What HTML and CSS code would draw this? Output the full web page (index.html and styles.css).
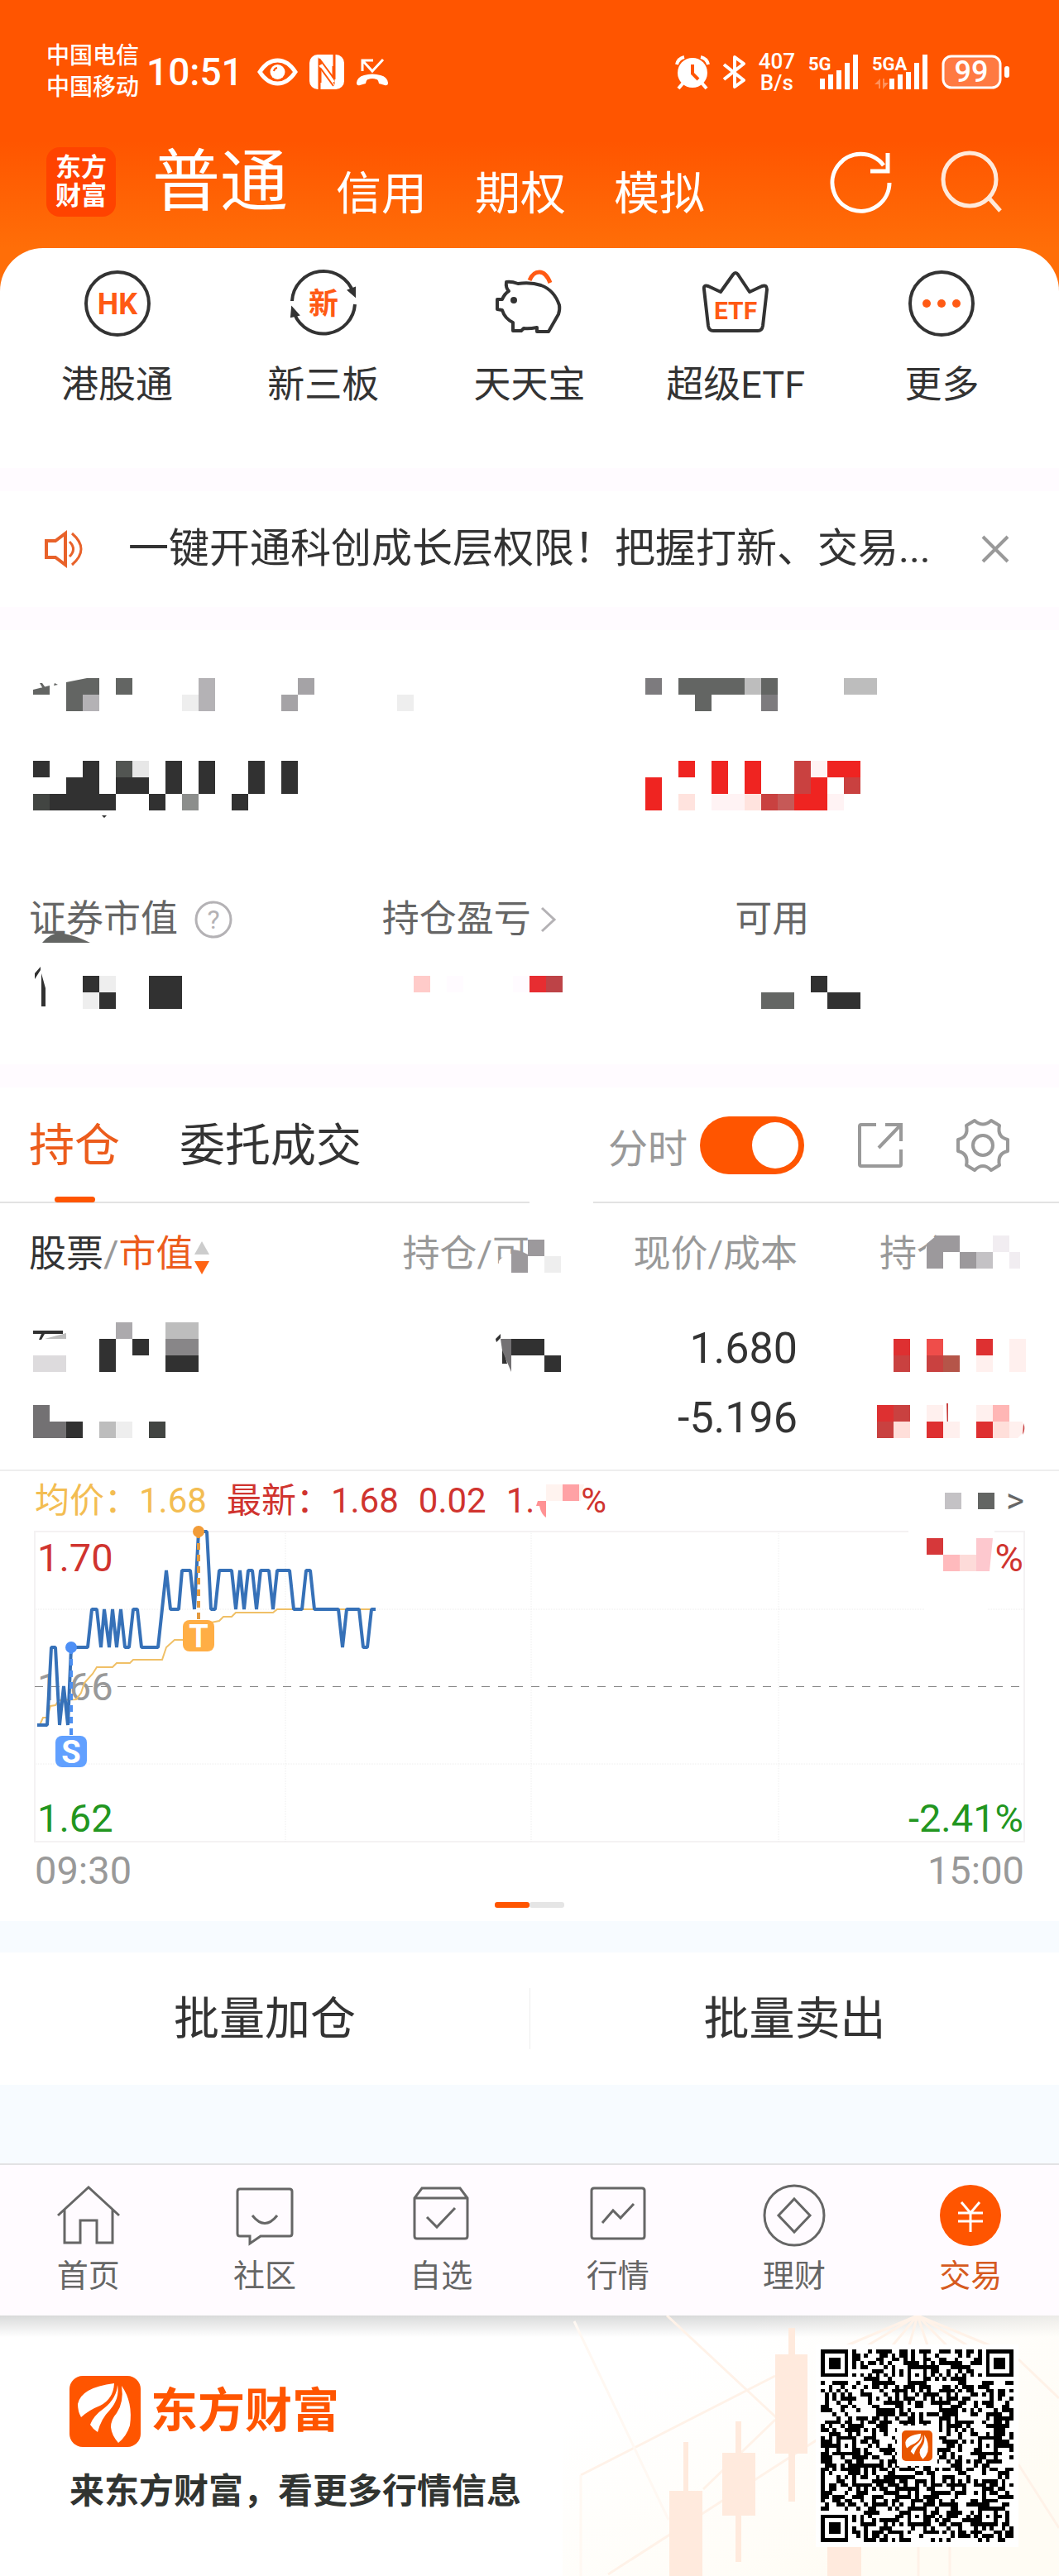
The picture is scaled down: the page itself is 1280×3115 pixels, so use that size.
FILE: index.html
```html
<!DOCTYPE html>
<html lang="zh-CN">
<head>
  <meta charset="UTF-8">
  <meta name="viewport" content="width=device-width, initial-scale=1.0">
  <title>东方财富 - 交易</title>
  <link rel="stylesheet" href="styles.css">
</head>
<body>

  <!-- Header -->
  <div class="top">
    <div class="status-bar">
      <div class="status-left">
        <div class="carriers"><div>中国电信</div><div>中国移动</div></div>
        <div class="clock">10:51</div>
        <div class="status-icons">
          <svg width="49" height="42" viewBox="0 0 49 42">
            <path d="M3 21Q12 7 24.500 7T46 21Q37 35 24.500 35T3 21z" fill="none" stroke="#fff" stroke-width="5"/>
            <circle cx="24.500" cy="21" r="9" fill="#fff"/>
            <path d="M20 20a5 5 0 0 1 4-4" fill="none" stroke="#ff5500" stroke-width="2"/>
          </svg>
          <svg width="42" height="42" viewBox="0 0 42 42">
            <rect width="42" height="42" rx="10" fill="#fff"/>
            <path d="M12 42V8l17 24V14M30 0v30M13 12v22" fill="none" stroke="#ff5500" stroke-width="3"/>
            <path d="M14 12l14 22" stroke="#fff" stroke-width="6"/>
            <path d="M12 5l17 23M13 16l16 22" stroke="#ff5500" stroke-width="2"/>
          </svg>
          <svg width="40" height="42" viewBox="0 0 40 42">
            <path d="M8 20V7h13M8 7l12 13L33 6" fill="none" stroke="#fff" stroke-width="3"/>
            <path d="M1 34q1-7 9-9 10-3 20 0 8 2 9 9 0 4-4 3l-7-2q-1-5-3-5-5-2-10 0-2 0-3 5l-7 2q-4 1-4-3z" fill="#fff"/>
          </svg>
        </div>
      </div>
      <div class="status-right">
        <svg width="42" height="42" viewBox="0 0 42 42">
          <circle cx="21" cy="22" r="18" fill="#fff"/>
          <path d="M2 12a12 12 0 0 1 9-9M40 12a12 12 0 0 0-9-9M10 34l-6 7M32 34l6 7" stroke="#fff" stroke-width="4" fill="none"/>
          <path d="M21 12v11l7 7" fill="none" stroke="#ff5500" stroke-width="4"/>
        </svg>
        <svg width="27" height="42" viewBox="0 0 27 42">
          <path d="M1 12l24 19-11 8V3l11 8L1 30" fill="none" stroke="#fff" stroke-width="4" stroke-linejoin="round"/>
        </svg>
        <div class="speed"><div>407</div><div>B/s</div></div>
        <svg width="61" height="42" viewBox="0 0 61 42" fill="#fff">
          <text x="0" y="19" class="net">5G</text>
          <path d="M14 29h6v13h-6zM24 24h6v18h-6zM34 19h6v23h-6zM44 10h6v32h-6zM54 0h6v42h-6z"/>
        </svg>
        <svg width="68" height="42" viewBox="0 0 68 42" fill="#fff">
          <text x="0" y="19" class="net">5GA</text>
          <path d="M3 36l7-7v12H8v-5zM13 29h2v5h5l-7 8z" opacity="0.35"/>
          <path d="M21 29h6v13h-6zM31 24h6v18h-6zM41 21h6v21h-6zM51 10h6v32h-6zM61 0h6v42h-6z"/>
        </svg>
        <svg width="82" height="42" viewBox="0 0 82 42">
          <rect x="2" y="2" width="69" height="38" rx="10" fill="#ff7a42" stroke="#fff" stroke-width="3"/>
          <rect x="76" y="14" width="6" height="14" rx="3" fill="#fff"/>
          <text x="36" y="33" text-anchor="middle" class="battery">99</text>
        </svg>
      </div>
    </div>

    <div class="nav">
      <div class="badge"><div>东方</div><div>财富</div></div>
      <nav class="modes">
        <a href="#" class="active">普通</a>
        <a href="#">信用</a>
        <a href="#">期权</a>
        <a href="#">模拟</a>
      </nav>
      <button class="icon-btn" aria-label="刷新">
        <svg width="74" height="74" viewBox="0 0 74 74" fill="none" stroke="#fff" stroke-width="5">
          <path d="M71 38A34.500 34.500 0 1 1 64 17"/>
          <path d="M69 2v22H48"/>
        </svg>
      </button>
      <button class="icon-btn" aria-label="搜索">
        <svg width="74" height="74" viewBox="0 0 74 74" fill="none" stroke="#ffe9da" stroke-width="5">
          <circle cx="34" cy="34" r="32"/>
          <path d="M56 55l15 17"/>
        </svg>
      </button>
    </div>

    <!-- Shortcuts -->
    <div class="shortcuts">
      <a href="#">
        <svg width="82" height="82" viewBox="0 0 82 82">
          <circle cx="41" cy="41" r="38" fill="none" stroke="#333" stroke-width="4"/>
          <text x="41" y="54" text-anchor="middle" class="ico-text">HK</text>
        </svg>
        <span>港股通</span>
      </a>
      <a href="#">
        <svg width="82" height="82" viewBox="0 0 82 82">
          <path d="M3 38A38 38 0 0 1 77 28M79 42A38 38 0 0 1 6 54" fill="none" stroke="#333" stroke-width="4"/>
          <path d="M71 25l8-3v10zM2 57l1-11 8 9z" fill="#333" stroke="#333" stroke-width="2"/>
          <text x="41" y="54" text-anchor="middle" class="ico-text">新</text>
        </svg>
        <span>新三板</span>
      </a>
      <a href="#">
        <svg width="82" height="82" viewBox="0 0 82 82">
          <path d="M41 13q4-10 12-10t13 13" fill="none" stroke="#ff5a14" stroke-width="5"/>
          <path d="M13 15q6-1 14 2 16-2 28 2 16 6 22 24 1 5-1 11L64 75H50v-5q-10 2-16 1l-3 3H21V64Q11 59 8 49l-6-1V36h6q3-7 8-10-4-4-3-11z" fill="none" stroke="#333" stroke-width="4" stroke-linejoin="round"/>
          <circle cx="22" cy="37" r="4" fill="#333"/>
        </svg>
        <span>天天宝</span>
      </a>
      <a href="#">
        <svg width="82" height="82" viewBox="0 0 82 82">
          <path d="M3 24q-1-6 5-4l15 7L38 6q3-4 6 0l14 21 15-7q6-2 6 4l-5 44q-1 6-6 6H14q-5 0-6-6z" fill="none" stroke="#333" stroke-width="4" stroke-linejoin="round"/>
          <text x="41" y="60" text-anchor="middle" class="ico-text small">ETF</text>
        </svg>
        <span>超级ETF</span>
      </a>
      <a href="#">
        <svg width="82" height="82" viewBox="0 0 82 82">
          <circle cx="41" cy="41" r="38" fill="none" stroke="#333" stroke-width="4"/>
          <g fill="#ff5a14"><circle cx="23" cy="41" r="5"/><circle cx="41" cy="41" r="5"/><circle cx="59" cy="41" r="5"/></g>
        </svg>
        <span>更多</span>
      </a>
    </div>
  </div>

  <!-- Notice -->
  <div class="notice">
    <svg width="48" height="44" viewBox="0 0 48 44" fill="none" stroke="#e8622a" stroke-width="4">
      <path d="M3 12h11L26 3v38L14 32H3z"/>
      <path d="M31 13q9 9 0 18M34 3q22 19 0 38" stroke-width="3"/>
    </svg>
    <p>一键开通科创成长层权限！把握打新、交易...</p>
    <button class="icon-btn" aria-label="关闭">
      <svg width="32" height="32" viewBox="0 0 32 32"><path d="M1 1l30 30M31 1L1 31" stroke="#999" stroke-width="4"/></svg>
    </button>
  </div>

  <!-- Account summary, amounts are masked -->
  <section class="account">
    <div class="totals">
      <svg width="420" height="40">
        <path fill="#636563" d="M0 14l20-5v11H0zM40 5L65 0h15v20H60v20H40zM100 0h20v20h-20zM8 6l3 0 5 7h-4zM26 6l4 2-5 1z"/>
        <path fill="#b4b2b5" d="M60 20h20v20H60zM200 0h20v40h-20z"/>
        <path fill="#a5a3a6" d="M320 0h20v20h-20zM300 20h20v20h-20z"/>
        <path fill="#eee" d="M180 20h20v20h-20zM440 20h20v20h-20z"/>
      </svg>
      <svg width="280" height="40">
        <path fill="#7d7b7e" d="M0 0h20v20H0zM140 20h20v20h-20z"/>
        <path fill="#636563" d="M40 0h80v20H80v20H60V20H40zM140 0h20v20h-20z"/>
        <path fill="#bdbdbd" d="M120 0h20v20h-20zM240 0h40v20h-40z"/>
      </svg>
      <svg width="340" height="60">
        <path fill="#313131" d="M0 0h20v20H0zM60 0h20v40h20v20H20V40h20V20h20zM100 20h40v20h-40zM160 0h20v40h-20zM200 0h20v40h-20zM260 0h20v40h-20zM300 0h20v40h-20zM140 40h20v20h-20zM240 40h20v20h-20zM83 66h6l-3 3z"/>
        <path fill="#525552" d="M100 0h20v20h-20z"/>
        <path fill="#424542" d="M0 40h20v20H0z"/>
        <path fill="#e7e7e7" d="M120 0h20v20h-20z"/>
        <path fill="#8c8e8c" d="M180 40h20v20h-20z"/>
      </svg>
      <svg width="280" height="60">
        <path fill="#ef2421" d="M0 20h20v40H0zM40 0h20v20H40zM80 0h20v40H80zM120 0h20v40h-20zM180 40h20V20h20v40h-40zM220 0h40v20h-40z"/>
        <path fill="#c94140" d="M180 0h20v40h-20zM240 20h20v20h-20zM140 40h20v20h-20z"/>
        <path fill="#c65957" d="M160 40h20v20h-20z"/>
        <path fill="#ffe3de" d="M40 40h20v20H40zM120 40h20v20h-20z"/>
        <path fill="#fff3f4" d="M80 40h40v20H80zM200 0h20v20h-20zM220 40h20v20h-20z"/>
      </svg>
    </div>
    <div class="details">
      <div class="detail">
        <div class="label">证券市值
          <svg width="46" height="46" viewBox="0 0 46 46">
            <circle cx="23" cy="23" r="21" fill="none" stroke="#b4b2b5" stroke-width="3"/>
            <text x="23" y="34" text-anchor="middle" class="help">?</text>
          </svg>
          <svg class="smudge" width="58" height="12"><path fill="#636563" d="M0 12Q10 0 22 0q18 3 36 12z"/></svg>
        </div>
        <svg width="200" height="50" viewBox="-2 -10 200 50">
          <path fill="#313131" d="M5-3l7-8v4L5 4zM13-3l5 18v22h-5zM63 0h20v20H63zM83 20h20v20H83zM143 0h40v40h-40z"/>
          <path fill="#eee" d="M83 0h20v20H83zM63 20h20v20H63z"/>
        </svg>
      </div>
      <div class="detail">
        <div class="label">持仓盈亏
          <svg width="18" height="30" viewBox="0 0 18 30"><path d="M1 1l15 14L1 29" fill="none" stroke="#b4b2b5" stroke-width="3"/></svg>
        </div>
        <svg width="220" height="50" viewBox="-2 -10 220 50">
          <path fill="#ffcbc9" d="M36 0h20v20H36z"/>
          <path fill="#fffbff" d="M76 0h20v20H76zM156 0h20v20h-20z"/>
          <path fill="#e72d31" d="M176 0h20v20h-20z"/>
          <path fill="#bd4347" d="M196 0h20v20h-20z"/>
        </svg>
      </div>
      <div class="detail">
        <div class="label">可用</div>
        <svg width="160" height="50" viewBox="-2 -10 160 50">
          <path fill="#646664" d="M30 20h40v20H30z"/>
          <path fill="#313131" d="M90 0h20v20H90zM110 20h40v20h-40z"/>
        </svg>
      </div>
    </div>
  </section>

  <!-- Holdings -->
  <section class="holdings">
    <div class="tabs">
      <a href="#" class="tab active">持仓</a>
      <a href="#" class="tab">委托成交</a>
      <div class="tools">
        <label for="minute-switch">分时</label>
        <input type="checkbox" id="minute-switch" class="switch" checked>
        <button class="icon-btn" aria-label="导出">
          <svg width="54" height="54" viewBox="0 0 54 54" fill="none" stroke="#999" stroke-width="4">
            <path d="M22 2H4q-2 0-2 2v46q0 2 2 2h46q2 0 2-2V32M33 2h19v20M51 3L25 30"/>
          </svg>
        </button>
        <button class="icon-btn" aria-label="设置">
          <svg width="64" height="64" viewBox="0 0 64 64" fill="none" stroke="#999" stroke-width="4" stroke-linejoin="round">
            <path d="M22 2q10 9 20 0l10 6q-3 14 10 17v14q-13 3-10 17l-10 6q-10-10-20 0l-10-6Q15 42 2 39V25Q15 22 12 8z"/>
            <circle cx="32" cy="32" r="12"/>
          </svg>
        </button>
      </div>
    </div>

    <table>
      <thead>
        <tr>
          <th class="c-name"><span class="dark">股票</span>/<span class="orange">市值</span><svg width="20" height="42" viewBox="0 0 20 42"><path d="M10 2l9 16H1z" fill="#ccc"/><path d="M10 42L1 26h18z" fill="#ff6414"/></svg></th>
          <th class="c-qty">持仓/可<svg class="cover" width="75" height="50" viewBox="0 0 75 50">
            <path fill="#fff" d="M0 50V28q8-12 35-10h40v32z"/>
            <path fill="#9c999c" d="M15 42V14q10 0 20 6V2h20v20H35v20z"/>
            <path fill="#eee" d="M55 22h20v20H55z"/></svg></th>
          <th class="c-price">现价/成本</th>
          <th class="c-profit"><span>持仓<svg class="cover" width="130" height="50" viewBox="0 0 130 50">
            <path fill="#fff" d="M6 50V24L14 4h116v46z"/>
            <path fill="#9c999c" d="M10 12l12-10h28v20H30v20H10zM50 22h20v20H50z"/>
            <path fill="#c4c2c5" d="M70 22h20v20H70z"/>
            <path fill="#f1edf1" d="M90 2h20v20H90zM110 22h13v20h-13z"/></svg></span></th>
        </tr>
      </thead>
      <tbody>
        <tr>
          <td class="c-name">
            <svg width="206" height="168" viewBox="-5 -10 206 168">
              <path fill="#313131" d="M0 10h36v4H14l-4 7H7l3-7H0zM80 20h20v40H80zM120 20h20v20h-20zM160 40h40v20h-40zM40 120h20v20H40z"/>
              <path fill="#bdbdbd" d="M14 20l26-7v7zM160 0h40v20h-40zM80 120h20v20H80z"/>
              <path fill="#acaaad" d="M100 0h20v20h-20z"/>
              <path fill="#888688" d="M160 20h40v20h-40z"/>
              <path fill="#dddbdd" d="M0 40h40v20H0z"/>
              <path fill="#737173" d="M0 100h20v20h20v20H0z"/>
              <path fill="#eee" d="M100 120h20v20h-20z"/>
              <path fill="#424542" d="M140 120h20v20h-20z"/>
            </svg>
          </td>
          <td class="c-qty">
            <svg width="80" height="168" viewBox="0 -10 80 168">
              <path fill="#313131" d="M1 20l6-6v5l-5 5zM9 28l6 22H9zM20 20h40v20H20zM60 40h20v20H60z"/>
              <path fill="#737173" d="M7 20h13v40L9 34z"/>
            </svg>
          </td>
          <td class="c-price"><div>1.680</div><div>-5.196</div></td>
          <td class="c-profit">
            <svg width="180" height="168" viewBox="0 -10 180 168">
              <path fill="#de3031" d="M20 20h20v20H20zM120 20h20v20h-20zM0 100h20v20H0zM60 120h20v20H60zM120 120h20v20h-20z"/>
              <path fill="#ef4d4a" d="M60 20h20v20H60z"/>
              <path fill="#c94140" d="M20 40h20v20H20zM60 40h20v20H60zM20 100h20v20H20zM0 120h20v20H0zM84 98h2v34h-1zM177 122q3 7-1 14z"/>
              <path fill="#b55549" d="M80 40h20v20H80z"/>
              <path fill="#fff0ee" d="M120 40h20v20h-20zM160 20h20v40h-20zM60 100h20v20H60zM80 120h20v20H80zM120 100h20v20h-20zM160 120h16v14l-6 6h-10z"/>
              <path fill="#ffdfda" d="M20 120h20v20H20zM140 120h20v20h-20z"/>
              <path fill="#ffb6b5" d="M140 100h20v20h-20z"/>
            </svg>
          </td>
        </tr>
      </tbody>
    </table>

    <!-- Minute chart -->
    <div class="minute">
      <div class="quote">
        <span class="avg">均价：1.68</span>
        <span>最新：1.68</span>
        <span>0.02</span>
        <span>1.<svg width="56" height="40" viewBox="0 0 56 40">
          <path fill="#ff9294" d="M4 20h10v20q-6-4-8-14l-4 0z"/>
          <path fill="#fff3ef" d="M14 0h20v20H14zM54 0h6l-4 20h-2z"/>
          <path fill="#ffa2a5" d="M34 0h20v20H34z"/></svg>%</span>
        <a href="#" class="more" aria-label="详情">
          <svg width="60" height="20"><path fill="#c4c2c5" d="M0 0h20v20H0z"/><path fill="#636563" d="M40 0h20v20H40z"/></svg>
          &gt;
        </a>
      </div>
      <svg class="chart" viewBox="0 0 1196 375">
        <rect x="0" y="0" width="1196" height="375" fill="none" stroke="#f4f2f3" stroke-width="2"/>
        <path d="M0 94h1196M0 281h1196M303 0v375M600 0v375M899 0v375" stroke="#eee" stroke-dasharray="1 1"/>
        <path d="M0 187.500h1196" stroke="#888" stroke-dasharray="10 10"/>
        <g class="axis">
          <text x="3" y="48" fill="#d0342f">1.70</text>
          <text x="3" y="204" fill="#999">1.66</text>
          <text x="3" y="363" fill="#22961f">1.62</text>
          <text x="1195" y="363" text-anchor="end" fill="#22961f">-2.41%</text>
        </g>
        <polyline fill="none" stroke="#f0c067" stroke-width="2" points="6,234 10,225 15,225 19,211 25,210 29,204 50,203 56,195 60,183 70,172 75,164 94,164 99,159 115,159 119,155 154,155 159,140 169,131 184,131 189,127 194,126 203,112 223,108 228,103 238,103 243,98 288,98 293,94 412,94"/>
        <polyline fill="none" stroke="#3671b8" stroke-width="4" stroke-linejoin="bevel" points="3,234 15,234 20,140 25,140 30,234 35,187 40,234 44,140 64,140 69,94 75,94 80,140 84,94 90,140 94,94 99,140 104,94 109,140 114,140 119,94 124,94 129,140 149,140 159,47 164,94 174,94 178,47 188,47 193,94 198,0 208,0 213,94 218,94 223,47 238,47 243,94 248,47 253,94 258,47 263,47 268,94 273,47 283,47 288,94 293,47 308,47 313,94 323,94 328,47 333,47 338,94 367,94 372,140 377,94 392,94 397,140 402,140 407,94 412,94"/>
        <path d="M198 0v107" stroke="#e39a3f" stroke-width="4" stroke-dasharray="8 6"/>
        <path d="M44 140v106" stroke="#4d8ff0" stroke-width="4" stroke-dasharray="8 6"/>
        <circle cx="198" cy="0" r="7" fill="#f29c38"/>
        <circle cx="44" cy="140" r="7" fill="#4d8ff5"/>
        <rect x="179" y="107" width="38" height="38" rx="8" fill="#ffae45"/>
        <rect x="25" y="247" width="38" height="38" rx="8" fill="#61a0ff"/>
        <text x="198" y="140" text-anchor="middle" class="mark">T</text>
        <text x="44" y="280" text-anchor="middle" class="mark">S</text>
        <path fill="#fff" d="M1056-3h104v50h-104zM1076 88h76v12h-76z"/>
        <path fill="#d6383a" d="M1078 8h20v20h-20z"/>
        <path fill="#ffbabd" d="M1098 28h20v20h-20z"/>
        <path fill="#fddbd9" d="M1118 28h20v20h-20z"/>
        <path fill="#fdc8ce" d="M1138 8h20l-4 40h-16z"/>
        <text x="1195" y="48" text-anchor="end" fill="#d0342f" class="pct">%</text>
      </svg>
      <div class="times"><span>09:30</span><span>15:00</span></div>
      <div class="pager"><i class="on"></i><i></i></div>
    </div>
  </section>

  <div class="batch">
    <button>批量加仓</button>
    <button>批量卖出</button>
  </div>

  <!-- Bottom tab bar -->
  <nav class="tabbar">
    <a href="#">
      <svg width="78" height="76" viewBox="0 0 78 76"><path d="M2 38L39 4l37 34M10 31v40h19V44h20v27h19V31"/></svg>
      <span>首页</span>
    </a>
    <a href="#">
      <svg width="78" height="76" viewBox="0 0 78 76"><path d="M9 6h60q3 0 3 3v51q0 3-3 3H34l-13 9v-9H9q-3 0-3-3V9q0-3 3-3zM24 38q15 19 30 0"/></svg>
      <span>社区</span>
    </a>
    <a href="#">
      <svg width="78" height="76" viewBox="0 0 78 76"><path d="M16 5h46l9 12v46q0 3-3 3H10q-3 0-3-3V17zM7 17h64M22 40l12 12 22-23"/></svg>
      <span>自选</span>
    </a>
    <a href="#">
      <svg width="78" height="76" viewBox="0 0 78 76"><path d="M10 5h58q3 0 3 3v55q0 3-3 3H10q-3 0-3-3V8q0-3 3-3zM20 47l13-15 9 9 16-17"/></svg>
      <span>行情</span>
    </a>
    <a href="#">
      <svg width="78" height="76" viewBox="0 0 78 76"><circle cx="39" cy="38" r="36"/><path d="M39 18l19 20-19 20-19-20z"/></svg>
      <span>理财</span>
    </a>
    <a href="#" class="active">
      <svg width="78" height="76" viewBox="0 0 78 76"><circle cx="39" cy="38" r="37"/><path d="M28 22l11 13 11-13M39 35v23M24 35h30M24 45h30"/></svg>
      <span>交易</span>
    </a>
  </nav>

  <!-- Share banner -->
  <footer class="banner">
    <svg class="candles" width="600" height="315" viewBox="680 0 600 315">
      <defs>
        <linearGradient id="cream" x1="0" y1="0" x2="1" y2="1">
          <stop offset="0.2" stop-color="#fffcf6" stop-opacity="0"/>
          <stop offset="0.8" stop-color="#fffcf4"/>
        </linearGradient>
      </defs>
      <rect x="680" width="600" height="315" fill="url(#cream)"/>
      <g fill="none" stroke="#fff2e8" stroke-width="3">
        <path d="M806 0l133 124M702 193l235-120M735 313L988 150M850 210l87-84M1109 0l-85 36M1109 0l-60 36M1109 0l-30 36M1109 0l-10 36M1109 0l12 36M1109 0l35 36M1109 0l60 36M1109 0l87 36M1231 53l49 47M1231 180l49 77M1110 274v41M1148 274v41"/>
        <path d="M694 7l114 240M702 193v122" stroke="#fff8f2"/>
      </g>
      <path fill="#ffeadd" d="M937 47h39v120h-39zM953 15h8v210h-8zM873 166h40v76h-40zM889 128h7v170h-7zM809 212h40v103h-40zM826 153h6v60h-6zM1000 280h41v35h-41z"/>
    </svg>
    <div class="brand">
      <div class="logo">
        <svg width="86" height="86" viewBox="0 0 86 86">
          <rect width="86" height="86" rx="16" fill="#ff5500"/>
          <path id="feather" fill="#fff" d="M54 9Q14 14 10 34q0 9 4 16Q24 41 37 36 53 28 54 9zM58 11q-1 16-16 28-13 9-17 20 3 5 9 9Q38 52 49 41 61 27 58 11zM63 12q14 20 10 48-4 13-14 21-8-9-9-19 0-9 7-17 9-13 6-33z"/>
        </svg>
        <span>东方财富</span>
      </div>
      <p>来东方财富，看更多行情信息</p>
    </div>
    <svg class="qr" id="qr" width="245" height="245" viewBox="-6 -6 245 245">
      <rect x="-6" y="-6" width="245" height="245" fill="#fff"/>
      <path id="qr-modules" fill="#000"/>
      <rect x="92" y="92" width="49" height="49" fill="#fff"/>
      <rect x="98" y="98" width="37" height="37" rx="5" fill="#e85600"/>
      <use href="#feather" transform="translate(98 98) scale(0.43)"/>
    </svg>
  </footer>

  <script src="script.js"></script>
</body>
</html>
```

FILE: styles.css
```css
* {
  box-sizing: border-box;
}

body {
  margin: 0;
  font-family: Roboto, "Noto Sans CJK SC", sans-serif;
  color: #333;
  background-color: #fffbff;
}

a {
  color: inherit;
  text-decoration: none;
}

p {
  margin: 0;
}

svg {
  display: block;
  flex-shrink: 0;
  overflow: visible;
}

button {
  font-family: inherit;
  color: inherit;
  background: none;
  border: none;
  padding: 0;
  cursor: pointer;
}

/* Header */
.top {
  background: linear-gradient(#ff5500 0, #ff5500 170px, #ff6e08 300px);
}

.status-bar {
  display: flex;
  justify-content: space-between;
  align-items: center;
  padding: 49px 60px 0 56px;
  color: #fff;
}

.status-left,
.status-right,
.status-icons {
  display: flex;
  align-items: center;
}

.status-left {
  gap: 9px;
}

.status-icons {
  gap: 14px;
  margin-left: 8px;
}

.status-right {
  gap: 16px;
}

.carriers {
  font-size: 28px;
  line-height: 38px;
  font-weight: 500;
}

.clock {
  font-size: 46px;
  font-weight: 500;
}

.speed {
  font-size: 26px;
  line-height: 26px;
  font-weight: 500;
  text-align: center;
}

.net {
  font-size: 22px;
  font-weight: 700;
}

.battery {
  font-size: 36px;
  font-weight: 500;
  fill: #fff;
}

.nav {
  display: flex;
  align-items: center;
  gap: 60px;
  padding: 53px 68px 38px 56px;
  color: #fff;
}

.badge {
  width: 84px;
  height: 84px;
  padding: 8px 0;
  border-radius: 16px;
  background-color: #ff4300;
  font-size: 31px;
  line-height: 34px;
  font-weight: 700;
  text-align: center;
}

.modes {
  flex: 1;
  display: flex;
  align-items: flex-end;
  gap: 58px;
  margin-left: -16px;
  font-size: 55px;
  line-height: 56px;
}

.modes .active {
  font-size: 82px;
  line-height: 84px;
}

.shortcuts {
  display: grid;
  grid-template-columns: repeat(5, 1fr);
  padding: 26px 17px 66px;
  border-radius: 52px 52px 0 0;
  background-color: #fff;
}

.shortcuts a {
  display: flex;
  flex-direction: column;
  align-items: center;
  gap: 24px;
  font-size: 45px;
  line-height: 68px;
}

.ico-text {
  font-size: 36px;
  font-weight: 700;
  fill: #ff5a14;
}

.ico-text.small {
  font-size: 30px;
}

/* Notice */
.notice {
  display: flex;
  align-items: center;
  margin: 28px 0;
  padding: 34px 61px 34px 53px;
  background-color: #fff;
}

.notice p {
  flex: 1;
  margin-left: 54px;
  font-size: 49px;
  line-height: 72px;
  white-space: nowrap;
}

/* Account */
.account {
  padding: 58px 0 67px;
  background-color: #fff;
}

.totals {
  display: grid;
  grid-template-columns: 37fr 23fr;
  gap: 60px 0;
  padding: 0 40px;
}

.details {
  display: grid;
  grid-template-columns: repeat(3, 1fr);
  margin-top: 104px;
}

.detail {
  padding-left: 35px;
}

.label {
  position: relative;
  display: flex;
  align-items: center;
  gap: 20px;
  margin-bottom: 30px;
  font-size: 45px;
  line-height: 56px;
  color: #666;
}

.detail:nth-child(2) .label {
  gap: 12px;
}

.smudge {
  position: absolute;
  left: 16px;
  bottom: 0;
}

.help {
  font-size: 32px;
  fill: #b4b2b5;
}

/* Holdings */
.holdings {
  margin: 28px 0 38px;
  background-color: #fff;
  box-shadow: 0 38px 0 #f7fbff;
}

.tabs {
  display: flex;
  align-items: center;
  gap: 72px;
  padding: 0 60px 0 35px;
  font-size: 55px;
  background: linear-gradient(90deg, #e2e2e2 50%, #fff 50% 56%, #e2e2e2 56%) bottom / 100% 2px no-repeat;
}

.tab {
  position: relative;
  line-height: 140px;
}

.tab.active,
.orange {
  color: #ec5c1c;
}

.tab.active::after {
  content: "";
  position: absolute;
  left: 50%;
  bottom: 1px;
  width: 49px;
  height: 7px;
  margin-left: -24px;
  border-radius: 4px;
  background-color: #ff5500;
}

.tools {
  display: flex;
  align-items: center;
  gap: 65px;
  margin-left: auto;
  font-size: 48px;
  color: #999;
}

.switch {
  appearance: none;
  width: 126px;
  height: 70px;
  margin: 0 0 0 -50px;
  padding: 7px;
  border-radius: 35px;
  background-color: #ccc;
  cursor: pointer;
}

.switch::before {
  content: "";
  display: block;
  width: 56px;
  height: 56px;
  border-radius: 50%;
  background-color: #fff;
}

.switch:checked {
  background-color: #ff5500;
}

.switch:checked::before {
  margin-left: auto;
}

table {
  width: 100%;
  table-layout: fixed;
  border-collapse: collapse;
}

th {
  position: relative;
  height: 114px;
  padding: 0;
  font-size: 45px;
  font-weight: 400;
  text-align: left;
  color: #999;
  white-space: nowrap;
}

td {
  padding: 20px 0;
  font-size: 52px;
  line-height: 84px;
  vertical-align: top;
  border-bottom: 2px solid #eee;
}

.c-name {
  width: 38%;
  padding-left: 35px;
}

.c-name svg {
  display: inline-block;
  vertical-align: middle;
}

td.c-name svg {
  display: block;
}

.c-qty {
  width: 15%;
}

.c-price {
  text-align: right;
}

td.c-qty svg,
td.c-profit svg {
  margin-left: auto;
}

.c-profit {
  width: 316px;
  padding-right: 40px;
}

th.c-profit {
  text-align: right;
}

th.c-profit span {
  position: relative;
  display: inline-block;
  width: 177px;
  text-align: left;
}

.cover {
  position: absolute;
  right: 0;
  top: 42px;
}

th.c-profit .cover {
  top: 12px;
}

.dark {
  color: #333;
}

/* Minute chart */
.minute {
  padding: 6px 42px 16px;
}

.quote {
  display: flex;
  align-items: center;
  gap: 24px;
  font-size: 42px;
  line-height: 60px;
  color: #d0342f;
  white-space: nowrap;
}

.quote span,
.quote .more {
  display: flex;
  align-items: center;
}

.quote .avg {
  color: #f3bd52;
}

.quote .more {
  gap: 14px;
  margin-left: auto;
  color: #666;
}

.chart {
  width: 100%;
  height: auto;
  margin-top: 7px;
}

.axis,
.pct {
  font-size: 47px;
}

.mark {
  font-size: 38px;
  font-weight: 700;
  fill: #fff;
}

.times {
  display: flex;
  justify-content: space-between;
  padding-top: 5px;
  font-size: 47px;
  line-height: 60px;
  color: #999;
}

.pager {
  display: flex;
  justify-content: center;
  margin-top: 8px;
}

.pager i {
  width: 42px;
  height: 7px;
  border-radius: 3px;
  background-color: #e5e5e5;
}

.pager .on {
  background-color: #ff5500;
}

/* Batch buttons */
.batch {
  display: grid;
  grid-template-columns: 1fr 1fr;
  margin-bottom: 95px;
  background-color: #fff;
  box-shadow: 0 95px 0 #f7fbff;
}

.batch button {
  height: 74px;
  margin: 43px 0;
  font-size: 55px;
  line-height: 74px;
}

.batch button + button {
  border-left: 1px solid #eee;
}

/* Tab bar */
.tabbar {
  position: relative;
  display: grid;
  grid-template-columns: repeat(6, 1fr);
  padding: 23px 0;
  border-top: 2px solid #e2e2e4;
  background-color: #fffbff;
}

.tabbar a {
  display: flex;
  flex-direction: column;
  align-items: center;
  gap: 10px;
  font-size: 38px;
  line-height: 50px;
  color: #666;
}

.tabbar svg {
  fill: none;
  stroke: #666;
  stroke-width: 3px;
}

.tabbar .active {
  color: #d65a20;
}

.tabbar .active circle {
  fill: #ff5500;
  stroke: none;
}

.tabbar .active path {
  stroke: #fff;
}

/* Share banner */
.banner {
  position: relative;
  display: flex;
  justify-content: space-between;
  align-items: flex-start;
  padding: 35px 49px 35px 84px;
  background: linear-gradient(#d9dada, #fff 26px);
}

.candles {
  position: absolute;
  right: 0;
  top: 0;
  overflow: hidden;
}

.brand,
.qr {
  position: relative;
}

.logo {
  display: flex;
  align-items: center;
  gap: 12px;
  margin-top: 38px;
  font-size: 57px;
  line-height: 86px;
  font-weight: 700;
  color: #ff5500;
}

.brand p {
  margin-top: 24px;
  font-size: 42px;
  line-height: 60px;
  font-weight: 700;
  color: #313431;
}
```

FILE: script.js
```js
// QR code, 49 x 49 modules
const N = 49;
const SIZE = 233;
let seed = 20241;

function random() {
  seed = (seed * 1103515245 + 12345) % 2147483648;
  return seed / 2147483648;
}

// square ring pattern around a centre, returns undefined when outside
function ring(x, y, cx, cy, outer) {
  const d = Math.max(Math.abs(x - cx), Math.abs(y - cy));
  if (d > outer) return undefined;
  if (outer === 4) return d === 3 || d < 2;
  return d !== 1;
}

function isDark(x, y) {
  const finders = [[3, 3], [N - 4, 3], [3, N - 4]];
  for (const [cx, cy] of finders) {
    const r = ring(x, y, cx, cy, 4);
    if (r !== undefined) return r;
  }
  const aligns = [[24, 6], [6, 24], [42, 24], [24, 42], [42, 42]];
  for (const [cx, cy] of aligns) {
    const r = ring(x, y, cx, cy, 2);
    if (r !== undefined) return r;
  }
  if (x === 6 || y === 6) return (x + y) % 2 === 0;
  return random() < 0.5;
}

let d = '';
for (let y = 0; y < N; y++) {
  for (let x = 0; x < N; x++) {
    if (!isDark(x, y)) continue;
    const x0 = Math.round(x * SIZE / N);
    const y0 = Math.round(y * SIZE / N);
    const x1 = Math.round((x + 1) * SIZE / N);
    const y1 = Math.round((y + 1) * SIZE / N);
    d += `M${x0} ${y0}H${x1}V${y1}H${x0}z`;
  }
}
document.getElementById('qr-modules').setAttribute('d', d);
```
